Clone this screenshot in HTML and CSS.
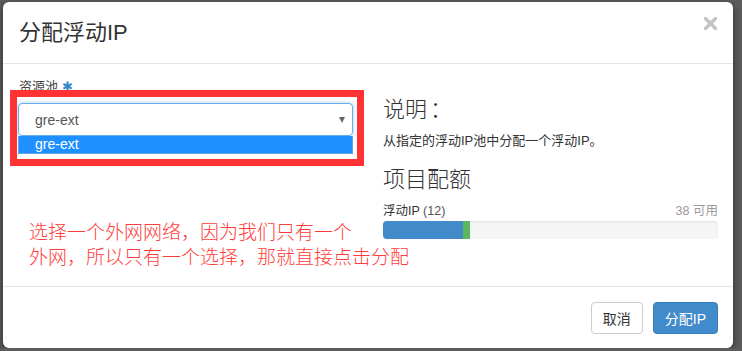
FILE: index.html
```html
<!DOCTYPE html>
<html lang="zh-CN">
<head>
    <meta charset="UTF-8">
    <title>分配浮动IP</title>
    <link rel="stylesheet" href="styles.css">
</head>
<body>
<div class="modal">
    <div class="modal-header">
        <h4 class="modal-title">分配浮动IP</h4>
        <span class="close">
            <svg width="13" height="13" viewBox="0 0 13 13"><path d="M1.5 1.5 L11.5 11.5 M11.5 1.5 L1.5 11.5" stroke="#c4c4c4" stroke-width="3.4" stroke-linecap="square"/></svg>
        </span>
    </div>
    <div class="modal-body">
        <div class="col-left">
            <label class="field-label">资源池 <span class="req">✱</span></label>
            <div class="select-box">
                <span>gre-ext</span>
                <span class="caret"></span>
            </div>
            <div class="select-option">gre-ext</div>
        </div>
        <div class="col-right">
            <h3>说明<span class="colon">：</span></h3>
            <p class="desc">从指定的浮动IP池中分配一个浮动IP。</p>
            <h3>项目配额</h3>
            <div class="quota-label">
                <span>浮动IP <span class="count">(12)</span></span>
                <span class="avail">38 可用</span>
            </div>
            <div class="bar">
                <div class="bar-used" style="width: 24%"></div>
                <div class="bar-new" style="width: 2%"></div>
            </div>
        </div>
        <div class="mark-box"></div>
        <div class="note">选择一个外网网络，因为我们只有一个<br>外网，所以只有一个选择，那就直接点击分配</div>
    </div>
    <div class="modal-footer">
        <button class="btn">取消</button>
        <button class="btn btn-primary">分配IP</button>
    </div>
</div>
</body>
</html>
```

FILE: styles.css
```css
body {
    margin: 0;
    background-color: #5c5c5c;
    font-family: 'Liberation Sans', 'Noto Sans CJK SC', sans-serif;
    font-size: 12px;
    color: #333;
}
.modal {
    width: 730px;
    height: 346px;
    margin: 2px 0 0 3px;
    background-color: #fff;
    border-radius: 6px;
    box-shadow: 0 3px 9px rgba(0, 0, 0, 0.5);
    display: flex;
    flex-direction: column;
}
.modal-header {
    height: 61px;
    padding: 0 16px;
    border-bottom: 1px solid #e5e5e5;
    display: flex;
    justify-content: space-between;
    align-items: flex-start;
}
.modal-title {
    margin: 0;
    padding-top: 15px;
    font-size: 22px;
    font-weight: normal;
    line-height: 31px;
    color: #333;
}
.close {
    padding-top: 15px;
}
.modal-body {
    position: relative;
    flex: 1;
    padding: 15px;
    display: grid;
    grid-template-columns: 1fr 1fr;
    column-gap: 30px;
    align-items: start;
}
.field-label {
    display: block;
    font-size: 13px;
    line-height: 16px;
    margin: 0 0 8px 1px;
    color: #444;
}
.req {
    color: #3a87c8;
    font-size: 13px;
}
.select-box {
    height: 31px;
    border: 1px solid #66afe9;
    border-radius: 4px;
    box-shadow: 0 0 4px rgba(102, 175, 233, 0.6);
    display: flex;
    align-items: center;
    justify-content: space-between;
    padding: 0 7px 0 16px;
    font-size: 14px;
    color: #555;
}
.caret {
    width: 0;
    height: 0;
    border-left: 3.5px solid transparent;
    border-right: 3.5px solid transparent;
    border-top: 6px solid #666;
}
.select-option {
    height: 17px;
    line-height: 17px;
    background-color: #1e90ff;
    border: 1px solid #6aa4e0;
    border-top: none;
    padding-left: 16px;
    font-size: 14px;
    color: #fff;
}
.col-right h3 {
    margin: 0;
    font-size: 22px;
    font-weight: 300;
    line-height: 26px;
    color: #333;
}
.col-right h3:first-child {
    margin-top: 15px;
}
.colon {
    font-family: 'Noto Sans CJK TC', sans-serif;
    margin-left: 3px;
}
.desc {
    margin: 9px 0 18px;
    font-size: 13px;
    line-height: 17px;
}
.quota-label {
    display: flex;
    justify-content: space-between;
    margin-top: 10px;
    font-size: 12.5px;
    line-height: 16px;
}
.count {
    color: #555;
}
.avail {
    color: #999;
}
.bar {
    height: 18px;
    margin-top: 2px;
    background-color: #f5f5f5;
    border-radius: 4px;
    box-shadow: inset 0 1px 2px rgba(0, 0, 0, 0.08);
    display: flex;
    overflow: hidden;
}
.bar-used { background-color: #428bca; }
.bar-new { background-color: #5cb85c; }

/* red annotation drawn over the screenshot */
.mark-box {
    position: absolute;
    left: 7px;
    top: 26px;
    width: 340px;
    height: 62px;
    border: 7px solid #ff3333;
}
.note {
    position: absolute;
    left: 26px;
    top: 154px;
    font-family: 'Noto Sans CJK SC', sans-serif;
    font-weight: 300;
    font-size: 19px;
    line-height: 25px;
    color: #ff3c3c;
}
.modal-footer {
    border-top: 1px solid #e5e5e5;
    padding: 15px 15px 14px;
    display: flex;
    justify-content: flex-end;
    gap: 10px;
}
.btn {
    height: 32px;
    padding: 0 11px;
    font-family: 'Liberation Sans', 'Noto Sans CJK SC', sans-serif;
    font-size: 14px;
    color: #333;
    background-color: #fff;
    border: 1px solid #ccc;
    border-radius: 4px;
}
.btn-primary {
    color: #fff;
    background-color: #428bca;
    border-color: #357ebd;
}
```
